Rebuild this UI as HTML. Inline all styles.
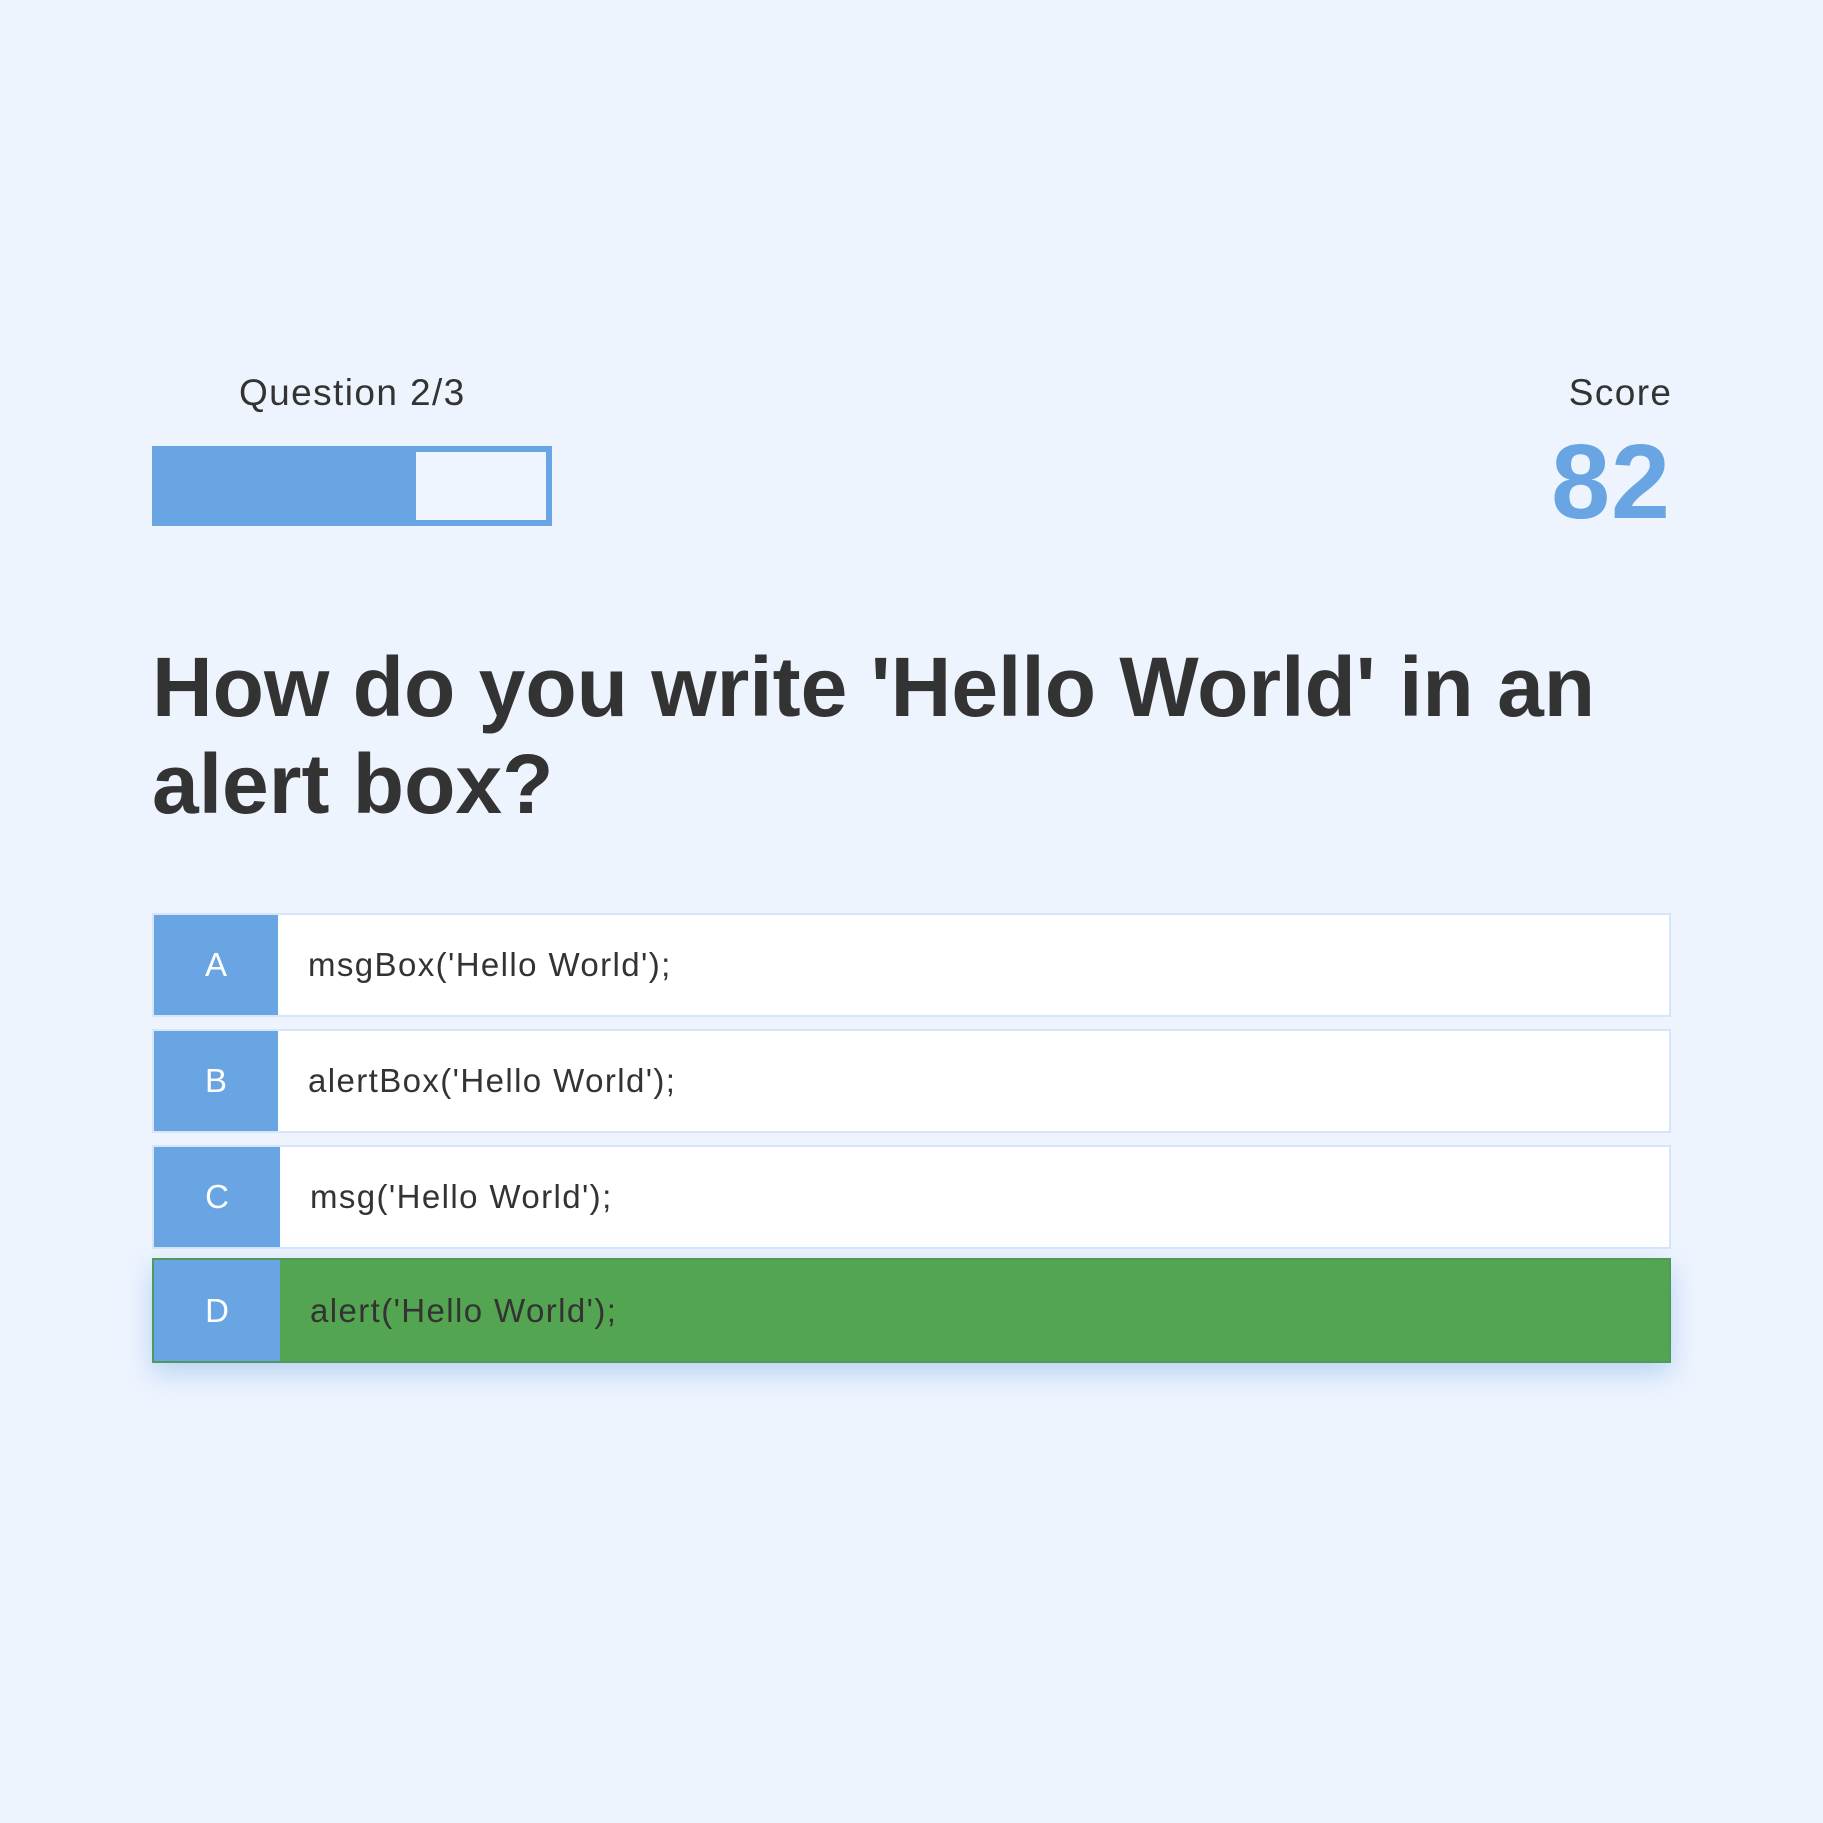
<!DOCTYPE html>
<html><head><style>
body{margin:0;width:1823px;height:1823px;background:#edf4fe;font-family:"Liberation Sans",sans-serif;color:#333;position:relative;overflow:hidden}
.a{position:absolute;line-height:1;white-space:nowrap}
.ls{letter-spacing:1.4px}
.bar{position:absolute;left:152px;top:446px;width:388px;height:68px;border:6px solid #69a5e2;background:#eef5fe}
.fill{position:absolute;left:0;top:0;width:258px;height:68px;background:#69a5e2}
.opt{position:absolute;left:152px;width:1519px;box-sizing:border-box;border:2px solid #d6e6f8;background:#fff;display:flex;align-items:center;font-size:33px;letter-spacing:1.4px}
.opt .l{width:124px;height:100%;background:#69a5e2;color:#fff;display:flex;align-items:center;justify-content:center;letter-spacing:0}
.opt .t{padding-left:30px}
</style></head><body>
<div class="a ls" style="left:239px;top:374px;font-size:37px">Question 2/3</div>
<div class="bar"><div class="fill"></div></div>
<div class="a ls" style="right:152px;top:374px;font-size:37px;letter-spacing:1.4px;margin-right:-1.4px">Score</div>
<div class="a" style="right:152px;top:429px;font-size:106px;font-weight:bold;color:#69a5e2;letter-spacing:1px">82</div>
<div style="position:absolute;left:152px;top:639px;font-size:84px;line-height:97px;font-weight:bold;width:1560px">How do you write 'Hello World' in an<br>alert box?</div>
<div class="opt" style="top:913px;height:104px"><div class="l">A</div><div class="t">msgBox('Hello World');</div></div>
<div class="opt" style="top:1029px;height:104px"><div class="l">B</div><div class="t">alertBox('Hello World');</div></div>
<div class="opt" style="top:1145px;height:104px"><div class="l" style="width:126px">C</div><div class="t">msg('Hello World');</div></div>
<div class="opt" style="top:1258px;height:105px;background:#53a552;border-color:#4f9a5a;box-shadow:0 10px 25px rgba(120,170,230,0.45)"><div class="l" style="width:126px">D</div><div class="t">alert('Hello World');</div></div>
</body></html>
